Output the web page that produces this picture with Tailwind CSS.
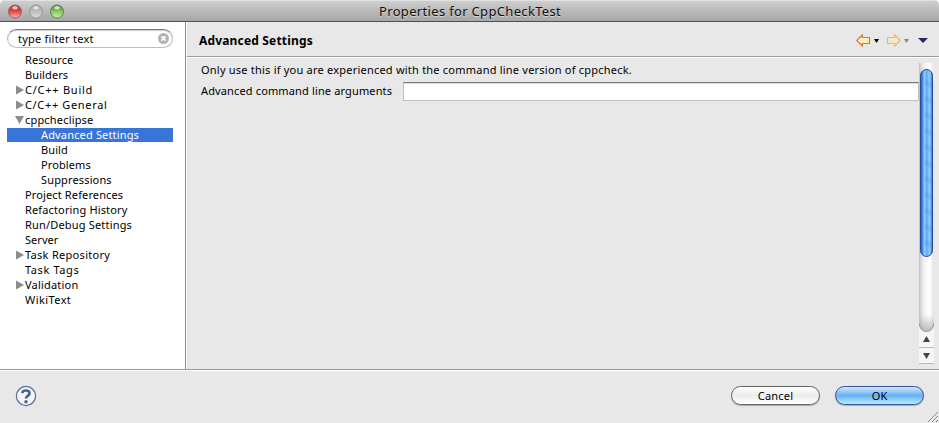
<!DOCTYPE html>
<html lang="en">
<head>
<meta charset="utf-8">
<title>Properties for CppCheckTest</title>
<script src="https://cdn.jsdelivr.net/npm/@tailwindcss/browser@4"></script>
</head>
<body class="bg-white">
<div class="w-[939px] h-[423px] overflow-hidden rounded-t-[5px] bg-[#e8e8e8] flex flex-col font-['Noto_Sans','Open_Sans',sans-serif] text-[11px] text-black relative">
  <header class="h-[22px] shrink-0 border-b border-[#515151] bg-linear-to-b from-[#d0d0d0] to-[#a6a6a6] shadow-[inset_0_1px_0_#e2e2e2] flex items-center relative pl-2">
    <svg class="w-[60px] h-4" viewBox="0 0 60 16">
      <defs>
        <linearGradient id="r" x2="0" y2="1"><stop stop-color="#a83434"/><stop offset=".45" stop-color="#dc4344"/><stop offset="1" stop-color="#ffb2ae"/></linearGradient>
        <linearGradient id="y" x2="0" y2="1"><stop stop-color="#a2a2a2"/><stop offset=".5" stop-color="#bebebe"/><stop offset="1" stop-color="#dedede"/></linearGradient>
        <linearGradient id="g" x2="0" y2="1"><stop stop-color="#488530"/><stop offset=".45" stop-color="#82c25a"/><stop offset="1" stop-color="#cdf89c"/></linearGradient>
      </defs>
      <g stroke-width="1"><circle cx="7" cy="8.500" r="6.500" fill="url(#r)" stroke="#9b5c5a"/><circle cx="28" cy="8.500" r="6.500" fill="url(#y)" stroke="#949494"/><circle cx="49" cy="8.500" r="6.500" fill="url(#g)" stroke="#5d8050"/></g>
      <g fill="#fff" opacity=".7"><ellipse cx="7" cy="4.800" rx="2.800" ry="1.700"/><ellipse cx="28" cy="4.800" rx="2.800" ry="1.700"/><ellipse cx="49" cy="4.800" rx="2.800" ry="1.700"/></g>
    </svg>
    <h1 class="ml-[311px] text-[13px] leading-[22px] tracking-[0.33px] whitespace-nowrap text-[#111] [text-shadow:0_1px_0_#d5d5d5]">Properties for CppCheckTest</h1>
  </header>
  <main class="flex h-[347px] shrink-0">
    <aside class="w-[186px] shrink-0 bg-white border-r border-[#8e8e8e] px-[7px] pt-[7px]">
      <div class="w-[166px] h-[19px] rounded-full border border-[#bdbdbd] border-t-[#777] shadow-[inset_0_1px_1px_#ccc] flex items-center justify-between pl-[10px] pr-[3px]">
        <span class="leading-[17px] tracking-[0.22px]">type filter text</span>
        <svg class="size-[11px]" viewBox="0 0 11 11"><circle cx="5.5" cy="5.5" r="5.5" fill="#b2b2b2"/><path d="M3.4 3.4l4.2 4.2M7.6 3.4L3.4 7.6" stroke="#fff" stroke-width="1.7"/></svg>
      </div>
      <ul class="mt-[4px] w-[166px] leading-[15px] whitespace-nowrap">
        <li class="h-[15px] pl-[18px] tracking-[0.1px]">Resource</li>
        <li class="h-[15px] pl-[18px] tracking-[0.1px]">Builders</li>
        <li class="h-[15px] pl-[9px] flex items-center tracking-[0.75px]"><svg class="w-[9px] h-[10px] shrink-0" viewBox="0 0 9 10"><path d="M0 .5L8 5 0 9.500z" fill="#8c8c8c"/></svg>C/C++ Build</li>
        <li class="h-[15px] pl-[9px] flex items-center tracking-[0.65px]"><svg class="w-[9px] h-[10px] shrink-0" viewBox="0 0 9 10"><path d="M0 .5L8 5 0 9.500z" fill="#8c8c8c"/></svg>C/C++ General</li>
        <li class="h-[15px] pl-[8px] flex items-center tracking-[0.18px]"><svg class="w-[10px] h-[10px] shrink-0" viewBox="0 0 10 10"><path d="M0 1H9L4.500 9z" fill="#8c8c8c"/></svg>cppcheclipse</li>
        <li class="h-[14px] my-px mb-0 pl-[34px] bg-[#3875d7] text-white leading-[14px] tracking-[0.16px]">Advanced Settings</li>
        <li class="h-[15px] pl-[34px] tracking-[0.1px]">Build</li>
        <li class="h-[15px] pl-[34px] tracking-[0.1px]">Problems</li>
        <li class="h-[15px] pl-[34px] tracking-[0.15px]">Suppressions</li>
        <li class="h-[15px] pl-[18px] tracking-[0.13px]">Project References</li>
        <li class="h-[15px] pl-[18px] tracking-[0.14px]">Refactoring History</li>
        <li class="h-[15px] pl-[18px] tracking-[0.18px]">Run/Debug Settings</li>
        <li class="h-[15px] pl-[18px] tracking-[0.05px]">Server</li>
        <li class="h-[15px] pl-[9px] flex items-center tracking-[0.3px]"><svg class="w-[9px] h-[10px] shrink-0" viewBox="0 0 9 10"><path d="M0 .5L8 5 0 9.500z" fill="#8c8c8c"/></svg>Task Repository</li>
        <li class="h-[15px] pl-[18px] tracking-[0.6px]">Task Tags</li>
        <li class="h-[15px] pl-[9px] flex items-center tracking-[0.2px]"><svg class="w-[9px] h-[10px] shrink-0" viewBox="0 0 9 10"><path d="M0 .5L8 5 0 9.500z" fill="#8c8c8c"/></svg>Validation</li>
        <li class="h-[15px] pl-[18px] tracking-[0.42px]">WikiText</li>
      </ul>
    </aside>
    <section class="flex-1 border-l border-white flex flex-col">
      <div class="h-[35px] border-b border-[#9a9a9a] shadow-[0_1px_0_#fff] flex items-center justify-between pl-3 pr-[10px] pt-[3px]">
        <h2 class="font-bold text-[12px] tracking-[0.17px] leading-4">Advanced Settings</h2>
        <svg class="w-[74px] h-4" viewBox="0 0 74 16">
          <defs><linearGradient id="a" x2="1" y2="1"><stop stop-color="#fff"/><stop offset="1" stop-color="#ffe48a"/></linearGradient></defs>
          <path d="M1.800 7.500L7.300 2V4.500H14.500V10.500H7.300V13Z" fill="url(#a)" stroke="#d07a38" stroke-width="1.200"/>
          <path d="M19 6h5L21.500 10z" fill="#000"/>
          <path d="M45.200 7.500L39.700 2V4.500H32.500V10.500H39.700V13Z" fill="#f4e8cc" stroke="#dfba83" stroke-width="1.200"/>
          <path d="M49 6h5L51.500 10z" fill="#898989"/>
          <path d="M63 5H73L68 10z" fill="#27275f"/>
        </svg>
      </div>
      <div class="flex-1 flex justify-between pt-[7px] pr-[5px]">
        <div class="w-[732px] overflow-hidden pl-[14px] whitespace-nowrap -mt-[2px]">
          <p class="leading-[15px] tracking-[0.22px]">Only use this if you are experienced with the command line version of cppcheck.</p>
          <div class="mt-[5px] flex items-start">
            <label for="args" class="w-[202px] leading-[17px] tracking-[0.14px]">Advanced command line arguments</label>
            <input id="args" class="w-[516px] h-[19px] bg-white border border-[#c0c0c0] border-t-[#777] shadow-[inset_0_1px_0_#ddd] outline-none">
          </div>
        </div>
        <svg class="w-[15px] h-[301px] -mt-px" viewBox="0 0 15 301">
          <defs>
            <linearGradient id="t"><stop stop-color="#c6c6c6"/><stop offset=".3" stop-color="#efefef"/><stop offset=".7" stop-color="#fff"/><stop offset="1" stop-color="#e5e5e5"/></linearGradient>
            <linearGradient id="b"><stop stop-color="#2255b5"/><stop offset=".15" stop-color="#3b86e2"/><stop offset=".35" stop-color="#9bcdfa"/><stop offset=".5" stop-color="#62aaf2"/><stop offset=".78" stop-color="#91d0ff"/><stop offset="1" stop-color="#3066bd"/></linearGradient>
            <linearGradient id="s" x2="0" y2="1"><stop stop-color="#999" stop-opacity="0"/><stop offset="1" stop-color="#999" stop-opacity=".7"/></linearGradient>
            <pattern id="w" width="15" height="16" patternUnits="userSpaceOnUse"><path d="M6 0L13 4V10L6 6Z" fill="#3b8ee9" opacity=".22"/></pattern>
          </defs>
          <path d="M0 0H15V301H0Z" fill="url(#t)"/>
          <path d="M0 252H15V269H0Z" fill="url(#s)"/>
          <path d="M.5 0V301" stroke="#c4c4c4"/>
          <path d="M0 260Q1 268.500 7.500 268.500T15 260V301H0Z" fill="#f5f5f5"/>
          <path d="M0 260Q1 268.500 7.500 268.500T15 260" fill="none" stroke="#999"/>
          <path d="M0 284.500H15M0 300.500H15" stroke="#bdbdbd"/>
          <rect x="1.500" y="6.500" width="12" height="187" rx="6" fill="url(#b)" stroke="#294a9b"/>
          <rect x="2" y="11" width="11" height="177" fill="url(#w)"/>
          <path d="M7.500 273L11 279H4ZM7.500 296L4 290H11Z" fill="#444"/>
        </svg>
      </div>
    </section>
  </main>
  <footer class="flex-1 border-t border-[#999] shadow-[inset_0_1px_0_#fff] flex items-center justify-between pl-[15px] pr-[15px] pb-[2px]">
    <svg class="size-[22px]" viewBox="0 0 22 22"><circle cx="11" cy="11" r="9.600" fill="#f4f5f7" stroke="#536c98" stroke-width="1.200"/><path d="M7.300 8.200C7.500 4.700 14.500 4.500 14.500 8.200C14.500 11 11 10.700 11 13.600" fill="none" stroke="#49628f" stroke-width="2.700"/><circle cx="11" cy="16.700" r="1.700" fill="#49628f"/></svg>
    <div class="flex gap-[15px] leading-[17px]">
      <button class="w-[89px] h-[19px] rounded-full border border-[#666] bg-linear-to-b from-white via-[#ececec] to-white shadow-[0_1px_1px_#aaa] tracking-[0.2px] flex items-center justify-center">Cancel</button>
      <button class="w-[89px] h-[19px] rounded-full border border-[#34549d] bg-linear-to-b from-[#c5e2fb] from-5% via-[#67b0f3] via-50% to-[#b5edff] shadow-[0_1px_1px_#aaa] flex items-center justify-center">OK</button>
    </div>
  </footer>
  <svg class="absolute right-0 bottom-0 w-3 h-3" viewBox="0 0 12 12"><path d="M1 11L11 1M5 11L11 5M9 11L11 9" stroke="#808080"/><path d="M2 11L11 2M6 11L11 6" stroke="#fff" stroke-width=".7"/></svg>
</div>
</body>
</html>
